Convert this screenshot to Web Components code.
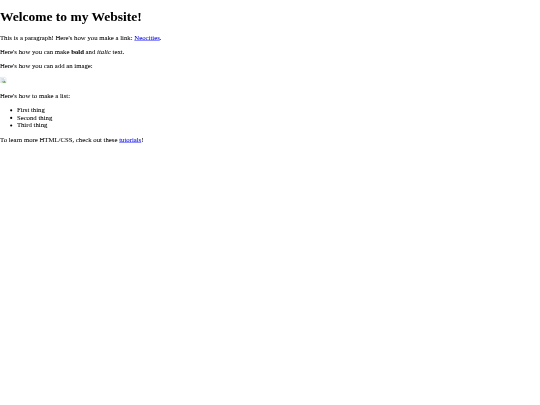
<!DOCTYPE html>
<html><head><meta charset="utf-8"><title>Welcome</title>
<style>html,body{margin:0;padding:0;background:#fff}</style></head>
<body><site-page></site-page>
<script>
class SitePage extends HTMLElement{
  constructor(){super();this.attachShadow({mode:'open'}).innerHTML=`<style>
  :host{display:block;width:540px;height:405px;overflow:hidden;color:#000;filter:blur(.3px)}
  .page{display:flow-root;width:1280px;height:960px;transform:scale(.421875);transform-origin:0 0;font:16px "Liberation Serif",serif;-webkit-text-stroke:.1px currentColor}
  h1{font-size:32px;font-weight:bold;margin:21.44px 0}
  p{margin:16px 0}
  a{color:#00e}
  ul{margin:16px 0;padding:0 0 0 40px}
  svg{vertical-align:baseline}
  </style>
  <div class="page">
  <h1>Welcome to my Website!</h1>
  <p>This is a paragraph! Here's how you make a link: <a href="#">Neocities</a>.</p>
  <p>Here's how you can make <b>bold</b> and <i>italic</i> text.</p>
  <p>Here's how you can add an image:</p>
  <p><svg width="16" height="16" viewBox="0 0 16 16"><path d="M1.5 .5H10.5L14.5 4.5V14.5H1.5Z" fill="#fff" stroke="#c2c6cb"/><path d="M3 2.5H9.5V6H13V8L9 11L6 9L3 11Z" fill="#d3dff0"/><path d="M6 13.5L10 9.5L13.5 11.5V14H6Z" fill="#5fa04e"/><path d="M3 13V11.5L6 9.5L8 11L6 13Z" fill="#a9c9a0"/></svg></p>
  <p>Here's how to make a list:</p>
  <ul><li>First thing</li><li>Second thing</li><li>Third thing</li></ul>
  <p>To learn more HTML/CSS, check out these <a href="#">tutorials</a>!</p>
  </div>`;
  }
}
customElements.define('site-page',SitePage);
</script></body></html>
